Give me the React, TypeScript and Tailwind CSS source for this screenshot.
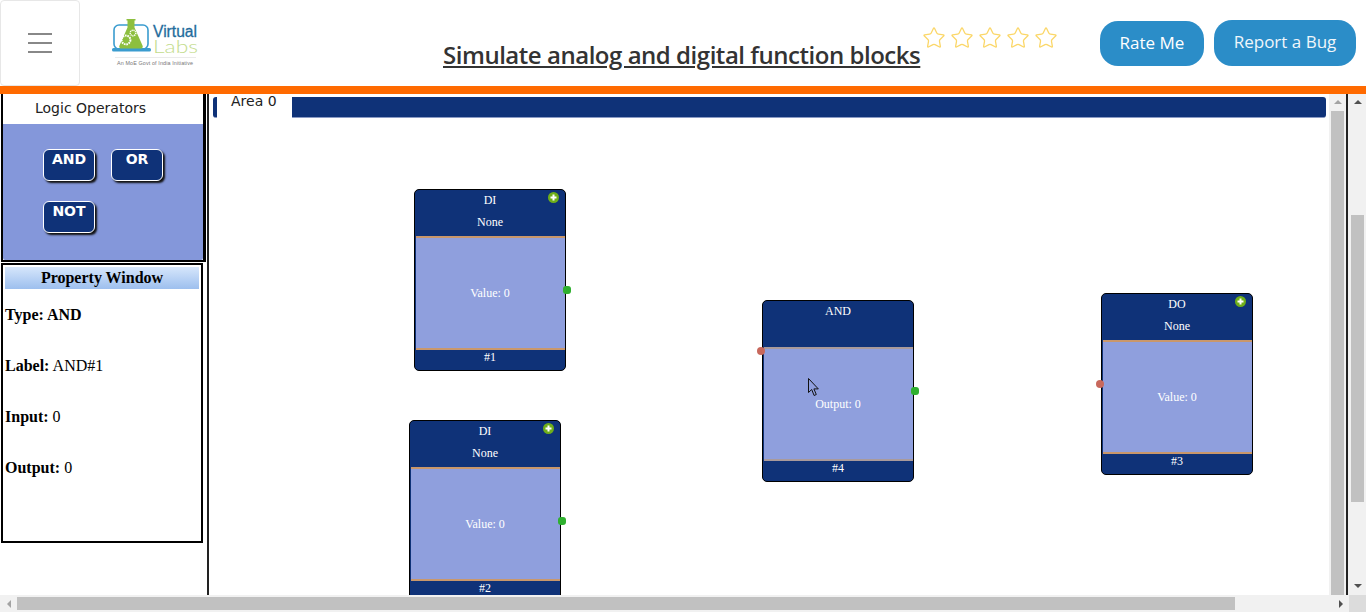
import React from "react";
import { Star } from "lucide-react";

const serif = "font-['Liberation_Serif',serif]";
const deja = "font-['DejaVu_Sans',sans-serif]";

function Logo() {
  return (
    <svg width="90" height="52" viewBox="0 0 90 52" className="block">
      <rect x="2" y="7" width="34" height="24" rx="5" fill="none" stroke="#3a9ccf" strokeWidth="1.6" />
      <rect x="0" y="30" width="39" height="3.5" rx="1.5" fill="#3a9ccf" />
      <path d="M14.5 1h9v1.5h-1v7l8 18a2 2 0 0 1-2 3H9.5a2 2 0 0 1-2-3l8-18v-7h-1z" fill="#8dbf3f" />
      <circle cx="14" cy="22" r="4.4" fill="none" stroke="#fff" strokeWidth="2" strokeDasharray="1.6 0.8" />
      <circle cx="21" cy="15" r="2.8" fill="none" stroke="#fff" strokeWidth="1.5" strokeDasharray="1.2 0.7" />
      <text x="41" y="19" fontFamily="'Liberation Sans',sans-serif" fontSize="16" fill="#1f6c9c" stroke="#1f6c9c" strokeWidth="0.3" textLength="44" lengthAdjust="spacingAndGlyphs">Virtual</text>
      <text x="41" y="35" fontFamily="'Lato',sans-serif" fontWeight="300" fontSize="17" fill="#c3dc8c" textLength="45" lengthAdjust="spacingAndGlyphs">Labs</text>
      <line x1="3" y1="39.5" x2="84" y2="39.5" stroke="#ddd" strokeWidth="0.6" />
      <text x="5" y="46.5" fontFamily="'Liberation Sans',sans-serif" fontSize="5.4" fill="#777" textLength="76">An MoE Govt of India Initiative</text>
    </svg>
  );
}

function Header() {
  return (
    <header className="flex h-[86px] shrink-0 bg-white">
      <div className="flex h-[86px] w-[80px] shrink-0 flex-col items-center justify-center gap-[7px] rounded-[4px] border border-[#e7e7e7]">
        <span className="h-[2px] w-[24px] bg-[#888]" />
        <span className="h-[2px] w-[24px] bg-[#888]" />
        <span className="h-[2px] w-[24px] bg-[#888]" />
      </div>
      <div className="ml-[32px] mt-[18px] w-[331px] shrink-0">
        <Logo />
      </div>
      <h1 className="mt-[39px] w-[477px] shrink-0 whitespace-nowrap font-['Open_Sans',sans-serif] text-[24px] font-semibold leading-[32px] tracking-[-0.47px] text-[#333] underline">
        Simulate analog and digital function blocks
      </h1>
      <div className="ml-[2px] mt-[26px] flex h-[24px] gap-[4px]">
        {[0, 1, 2, 3, 4].map((i) => (
          <Star key={i} size={24} strokeWidth={1.3} className="text-[#fbd769]" />
        ))}
      </div>
      <button className="ml-[42px] mt-[21px] h-[45px] w-[104px] rounded-[18px] bg-[#2b8dc8] pb-[2px] font-['Open_Sans',sans-serif] text-[17px] text-white">
        Rate Me
      </button>
      <button className="ml-[10px] mt-[20px] h-[46px] w-[142px] rounded-[18px] bg-[#2b8dc8] pb-[2px] font-['Open_Sans',sans-serif] text-[17px] text-[#f0f6fb]">
        Report a Bug
      </button>
    </header>
  );
}

function OpButton({ label }: { label: string }) {
  return (
    <button className={`flex h-[32px] w-[52px] justify-center rounded-[6px] border border-white bg-[#0f3278] pt-[1px] ${deja} text-[14px] font-bold leading-[16px] text-white shadow-[2px_2px_2px_#111]`}>
      {label}
    </button>
  );
}

function Sidebar() {
  return (
    <aside className="w-[207px] shrink-0 bg-white">
      <div className="ml-[1px] h-[168px] w-[205px] border-b-[2px] border-l-[2px] border-r-[3px] border-black">
        <div className={`h-[30px] pl-[32px] pt-[5px] ${deja} text-[14px] leading-[18px] text-[#222]`}>Logic Operators</div>
        <div className="flex h-[136px] flex-wrap content-start gap-x-[16px] gap-y-[20px] rounded-b-[2px] bg-[#8497da] pl-[40px] pt-[25px]">
          <OpButton label="AND" />
          <OpButton label="OR" />
          <OpButton label="NOT" />
        </div>
      </div>
      <div className={`ml-[1px] mt-[1px] h-[280px] w-[202px] border-[2px] border-black p-[2px] ${serif} text-black`}>
        <div className="h-[22px] bg-gradient-to-b from-[#d6e6fb] to-[#9dbfee] text-center text-[16px] font-bold leading-[22px]">Property Window</div>
        <div className="mt-[17px] flex flex-col gap-[33px] text-[16px] leading-[18px]">
          <p><b>Type: AND</b></p>
          <p><b>Label:</b> AND#1</p>
          <p><b>Input:</b> 0</p>
          <p><b>Output:</b> 0</p>
        </div>
      </div>
    </aside>
  );
}

function Plus() {
  return (
    <svg width="11" height="11" viewBox="0 0 11 11" className="absolute right-[6px] top-[2px]">
      <circle cx="5.5" cy="5.5" r="5.5" fill="#6fae1a" />
      <path d="M5.5 2.5v6M2.5 5.5h6" stroke="#fff" strokeWidth="2" />
    </svg>
  );
}

type NodeProps = {
  pos: string;
  title: string;
  sub?: string;
  value: string;
  id: string;
  plus?: boolean;
  line?: string;
};

function FlowNode({ pos, title, sub, value, id, plus, line = "border-[#c9976b]" }: NodeProps) {
  return (
    <div className={`absolute ${pos} flex h-[182px] w-[152px] flex-col rounded-[5px] border border-black bg-[#0f3278] ${serif} text-[12px] text-white`}>
      {plus && <Plus />}
      <div className="h-[46px] shrink-0 pt-[2px] text-center">
        <div className="h-[21px] leading-[16px]">{title}</div>
        {sub && <div className="leading-[18px]">{sub}</div>}
      </div>
      <div className={`ml-[1px] flex h-[114px] shrink-0 items-center justify-center border-y-[2px] pr-[1px] ${line} bg-[#8f9fdd] text-white`}>{value}</div>
      <div className="text-center leading-[15px]">{id}</div>
    </div>
  );
}

function GreenDot({ pos }: { pos: string }) {
  return <span className={`absolute ${pos} h-[8px] w-[8px] rounded-[3px] bg-[#2fb02f]`} />;
}

function RedDot({ pos }: { pos: string }) {
  return <span className={`absolute ${pos} h-[8px] w-[8px] rounded-full bg-[#c8685c]`} />;
}

function Canvas() {
  return (
    <main className="relative min-w-0 flex-1 overflow-hidden bg-white">
      <div className="ml-[4px] mr-[3px] mt-[3px] h-[21px] rounded-[3px] border-b border-[#8a9ac4] bg-[#0f3278]" />
      <div className={`absolute left-[8px] top-0 h-[24px] w-[75px] bg-white pl-[14px] ${deja} text-[14px] leading-[14px] text-[#222]`}>Area 0</div>

      <FlowNode pos="left-[205px] top-[95px]" title="DI" sub="None" value="Value: 0" id="#1" plus />
      <GreenDot pos="left-[354px] top-[192px]" />
      <FlowNode pos="left-[200px] top-[326px]" title="DI" sub="None" value="Value: 0" id="#2" plus />
      <GreenDot pos="left-[349px] top-[423px]" />
      <FlowNode pos="left-[553px] top-[206px]" title="AND" value="Output: 0" id="#4" line="border-[#a99a9b]" />
      <RedDot pos="left-[548px] top-[253px]" />
      <GreenDot pos="left-[702px] top-[293px]" />
      <FlowNode pos="left-[892px] top-[199px]" title="DO" sub="None" value="Value: 0" id="#3" plus />
      <RedDot pos="left-[887px] top-[286px]" />

      <svg width="12" height="20" viewBox="0 0 12 20" className="absolute left-[599px] top-[284px]">
        <path d="M0.5 0.5v14l3.2-3 2.4 6 2.2-1-2.4-5.6h4.4z" fill="#8f9fdd" stroke="#111" strokeWidth="1" />
      </svg>
    </main>
  );
}

function Tri({ dir, color }: { dir: "up" | "down" | "left" | "right"; color: string }) {
  const cls = {
    up: "border-x-[4px] border-b-[4px] border-x-transparent",
    down: "border-x-[4px] border-t-[4px] border-x-transparent",
    left: "border-y-[4px] border-r-[4px] border-y-transparent",
    right: "border-y-[4px] border-l-[4px] border-y-transparent",
  }[dir];
  return <span className={`block h-0 w-0 ${cls} ${color}`} />;
}

export default function App() {
  return (
    <div className="flex h-[612px] w-[1366px] flex-col overflow-hidden bg-white">
      <Header />
      <div className="h-[8px] shrink-0 bg-[#ff6a00]" />
      <div className="flex h-[501px] shrink-0">
        <Sidebar />
        <div className="w-[2px] shrink-0 bg-[#222]" />
        <Canvas />
        <div className="flex w-[17px] shrink-0 flex-col items-center bg-[#f1f1f1] pt-[6px]">
          <Tri dir="up" color="border-b-[#a3a3a3]" />
          <div className="mt-[7px] w-[13px] flex-1 bg-[#c1c1c1]" />
        </div>
        <div className="w-[2px] shrink-0 bg-[#222]" />
        <div className="flex w-[18px] shrink-0 flex-col items-center bg-[#f1f1f1] pl-[1px] pt-[6px]">
          <Tri dir="up" color="border-b-[#505050]" />
          <div className="mt-[111px] h-[287px] w-[13px] bg-[#c1c1c1]" />
          <div className="mt-[82px]">
            <Tri dir="down" color="border-t-[#505050]" />
          </div>
        </div>
      </div>
      <div className="flex h-[17px] shrink-0 items-center bg-[#f1f1f1]">
        <div className="flex w-[17px] justify-center">
          <Tri dir="left" color="border-r-[#a3a3a3]" />
        </div>
        <div className="h-[13px] w-[1218px] bg-[#c1c1c1]" />
        <div className="ml-[104px]">
          <Tri dir="right" color="border-l-[#505050]" />
        </div>
        <div className="ml-[6px] h-[17px] w-[17px] bg-[#dcdcdc]" />
      </div>
    </div>
  );
}
